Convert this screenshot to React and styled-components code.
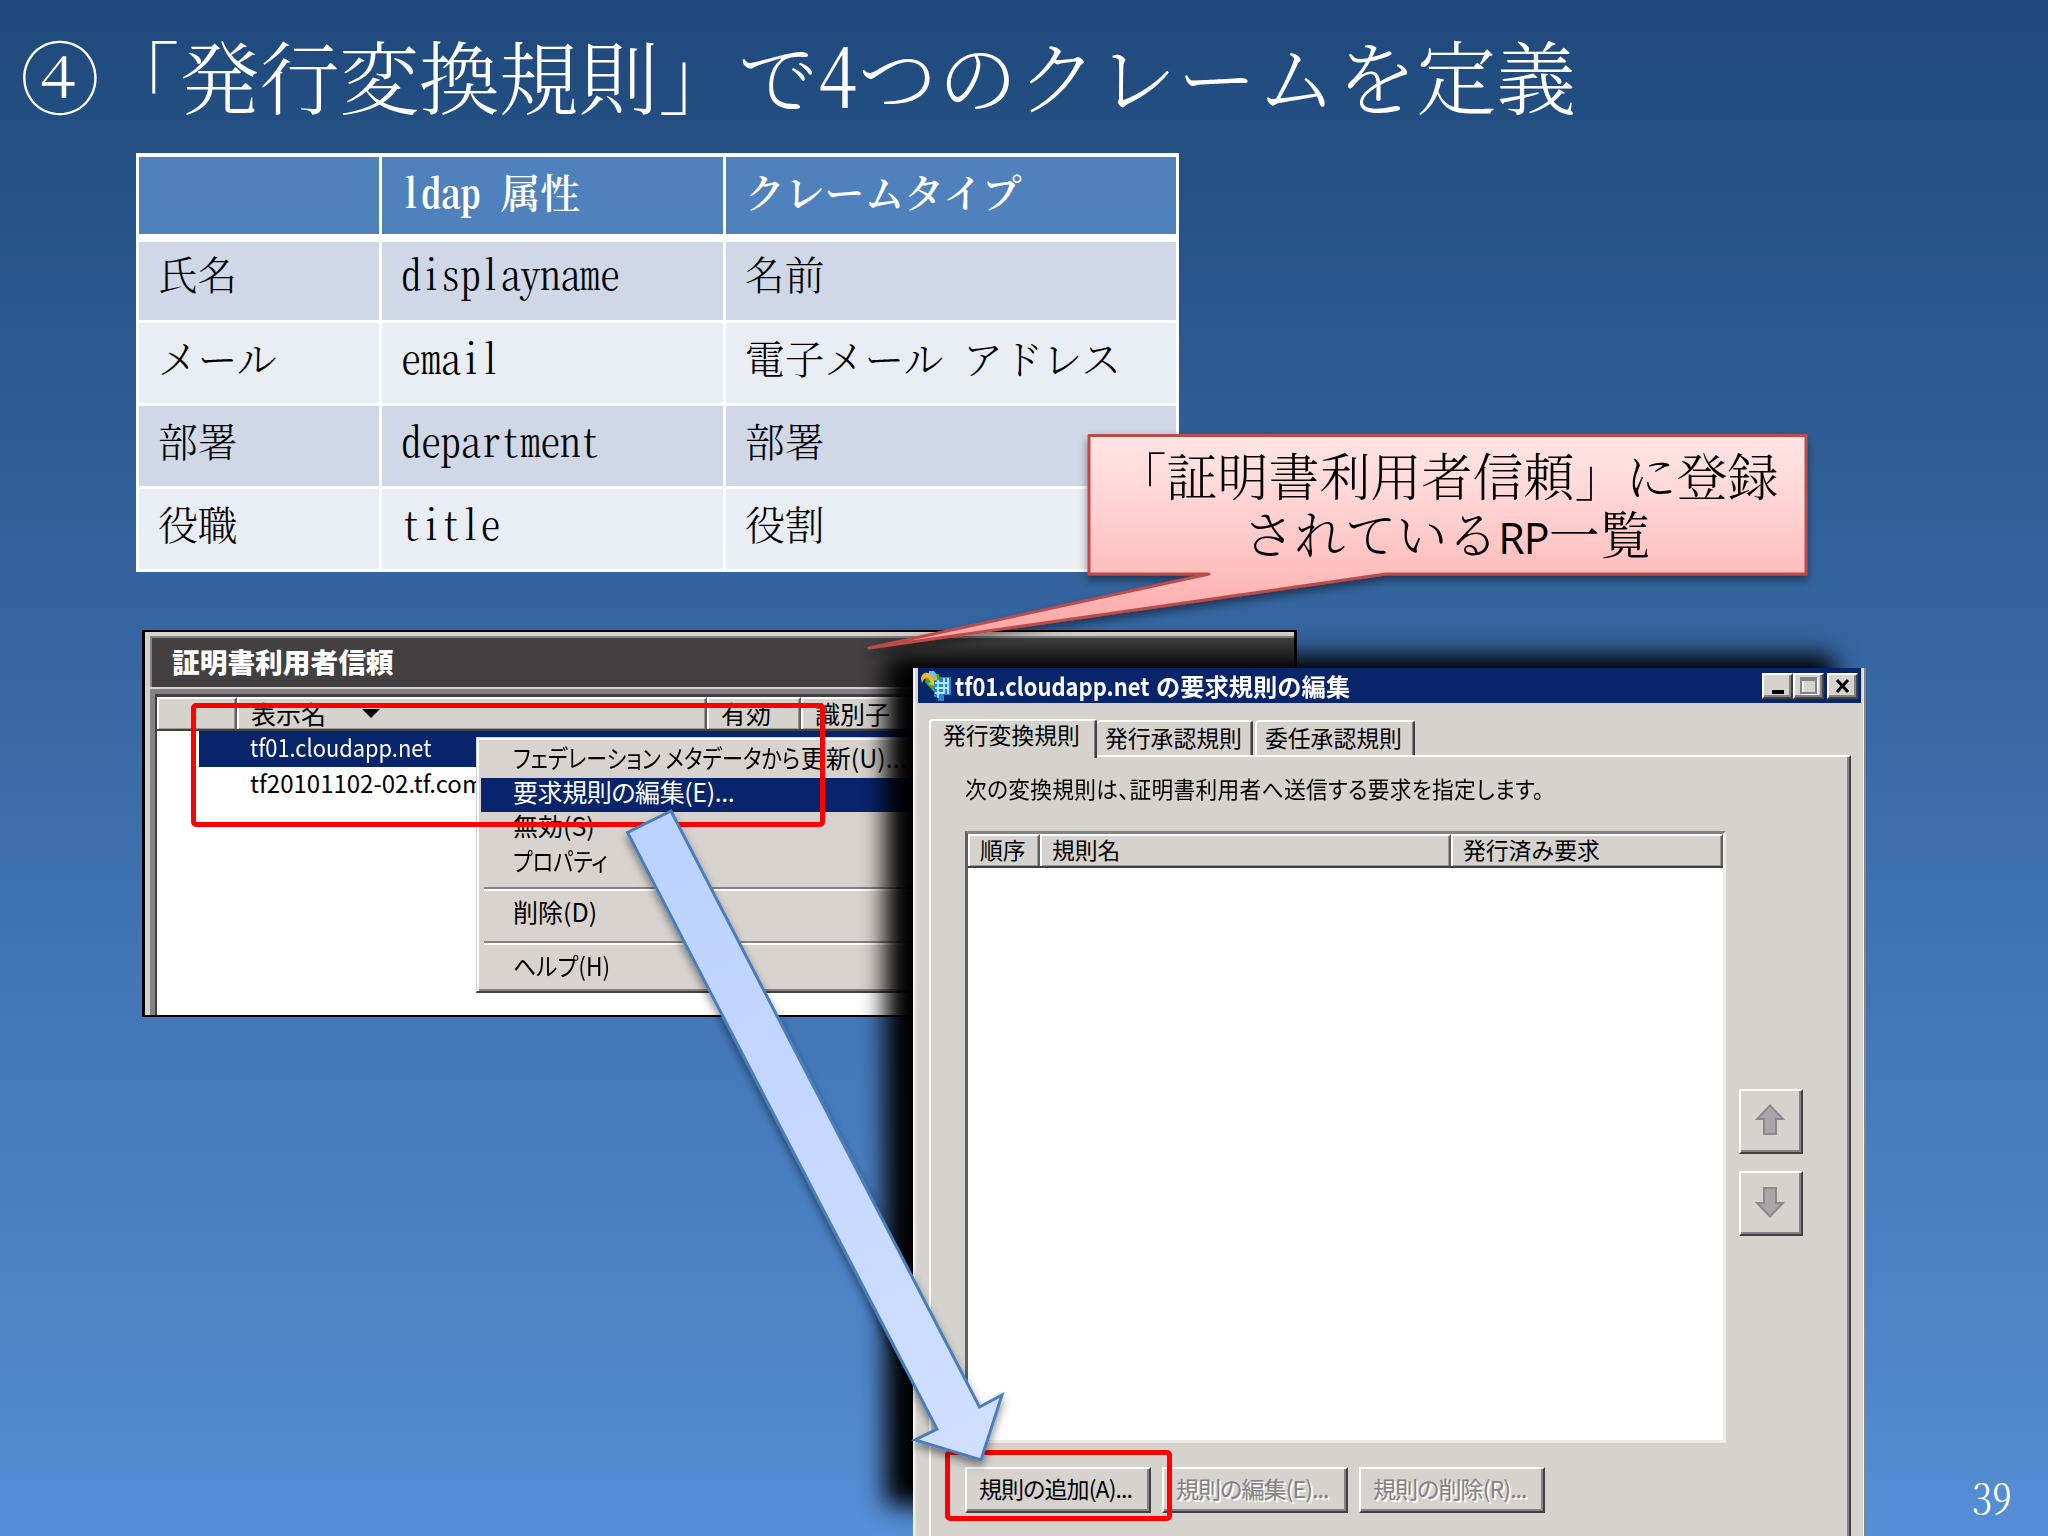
import React from 'react';
import styled, { createGlobalStyle, css } from 'styled-components';

const GlobalStyle = createGlobalStyle`
  * { box-sizing: border-box; }
  body { margin: 0; overflow: hidden; }
`;

const mincho = '"Noto Serif CJK JP", "Liberation Serif", "Noto Sans CJK JP", serif';
const gothic = '"Noto Sans CJK JP", sans-serif';
const face = '#d6d3ce';

const Slide = styled.main`
  position: relative;
  width: 2048px;
  height: 1536px;
  overflow: hidden;
  background: linear-gradient(#1f497b, #558ed5);
  font-family: ${gothic};
  color: #000;
`;

const Title = styled.h1`
  margin: 0;
  padding: 25px 0 0 20px;
  height: 153px;
  font: 300 79.8px/98px ${mincho};
  font-feature-settings: 'hwid';
  color: #fff;
  white-space: nowrap;
`;

const Table = styled.section`
  display: grid;
  grid-template-columns: 240px 341px 450px;
  grid-template-rows: 77px 83px 80px 80px 80px;
  gap: 3px;
  width: 1043px;
  margin-left: 136px;
  padding: 4px 3px 3px;
  background: #fff;
`;

const Cell = styled.div`
  padding: ${(p) => (p.$first ? 14 : 12)}px 0 0 19px;
  background: ${(p) => (p.$band ? '#d0d8e8' : '#e9edf4')};
  font: 300 39.8px/44px ${mincho};
  font-feature-settings: 'hwid';
  white-space: pre;
`;

const HeadCell = styled(Cell)`
  position: relative;
  background: #4f81bd;
  color: #fff;
  font-weight: 600;
  &::after {
    content: '';
    position: absolute;
    left: 0;
    right: 0;
    bottom: -8px;
    height: 8px;
    background: #fff;
  }
`;

const Console = styled.section`
  position: absolute;
  left: 142px;
  top: 630px;
  width: 1155px;
  height: 387px;
  border: 3px solid #000;
  border-top-width: 2px;
  border-bottom-width: 2px;
  background: ${face};
  padding: 4px 0 0 5px;
  display: flex;
  flex-direction: column;
  overflow: hidden;
`;

const ConsoleTitle = styled.h2`
  margin: 0;
  flex: none;
  height: 51px;
  border-top: 2px solid #848284;
  border-left: 2px solid #848284;
  background: #424041;
  color: #fff;
  font: 900 27.7px/46px ${gothic};
  padding-left: 20px;
`;

const ConsoleBody = styled.div`
  margin-top: 2px;
  flex: 1;
  border-top: 5px solid #848284;
  border-left: 5px solid #848284;
  background: #fff;
`;

const ConsoleInner = styled.div`
  height: 100%;
  border-top: 3px solid #424041;
  border-left: 2px solid #424041;
`;

const HeaderRow = styled.div`
  display: grid;
  grid-template-columns: ${(p) => p.$cols};
  height: ${(p) => p.$h}px;
  border-bottom: 2px solid #424142;
`;

const HeaderCell = styled.div`
  display: flex;
  align-items: center;
  gap: 36px;
  background: ${face};
  border-top: 2px solid #fff;
  border-left: 2px solid #fff;
  border-right: 2px solid #62605d;
  box-shadow: inset -1px -1px #9a9894;
  padding-left: ${(p) => p.$pad}px;
  padding-bottom: 2px;
  font-size: ${(p) => p.$size}px;
  line-height: 1;
  white-space: nowrap;
`;

const SortMark = styled.span`
  border: 9px solid transparent;
  border-top-color: #000;
  border-bottom: 0;
`;

const ListRow = styled.div`
  margin-left: 42px;
  height: 36px;
  padding-left: 51px;
  font-size: 24px;
  line-height: 31px;
  white-space: nowrap;
  ${(p) => p.$selected && css`
    background: #08246b;
    color: #fff;
  `}
`;

const Squeeze = styled.span`
  display: inline-block;
  transform: scaleX(${(p) => p.$k});
  transform-origin: 0 50%;
  margin-right: ${(p) => p.$pull || 0}px;
`;

const Menu = styled.div`
  position: absolute;
  left: 476px;
  top: 737px;
  width: 470px;
  height: 256px;
  display: flex;
  flex-direction: column;
  padding: 3px 4px 0;
  background: #d9d3cf;
  border-style: solid;
  border-color: #d6d3ce #d6d3ce #424041;
  border-width: 1px 1px 2px;
  box-shadow: inset 2px 2px #fff, inset 0 -2px #848284;
`;

const MenuItem = styled.div`
  flex: none;
  height: ${(p) => p.$h || 34}px;
  padding-left: 32px;
  font-size: 25px;
  line-height: ${(p) => p.$lh || 26}px;
  font-feature-settings: 'palt';
  letter-spacing: ${(p) => (p.$active ? -0.4 : 0)}px;
  white-space: nowrap;
  ${(p) => p.$active && css`
    background: #08246b;
    color: #fff;
  `}
`;

const MenuRule = styled.hr`
  flex: none;
  width: calc(100% - 4px);
  height: 3px;
  margin: ${(p) => p.$above}px 0 7px 3px;
  border: 0;
  border-top: 2px solid #848284;
  border-bottom: 2px solid #fff;
`;

const Highlight = styled.div`
  position: absolute;
  left: ${(p) => p.$x}px;
  top: ${(p) => p.$y}px;
  width: ${(p) => p.$w}px;
  height: ${(p) => p.$h}px;
  border: 5px solid #fe0000;
  border-radius: 5px;
`;

const Dialog = styled.section`
  position: absolute;
  left: 913px;
  top: 668px;
  width: 953px;
  height: 868px;
  background: ${face};
  border-left: 2px solid #f4f3f0;
  border-right: 2px solid #85827f;
  box-shadow: inset 2px 0 #dcdad6, inset -1px 0 #f4f3f0;
  padding: 0 3px;
`;

const DialogShadow = styled.div`
  position: absolute;
  left: 885px;
  top: 655px;
  width: 950px;
  height: 851px;
  background: #000;
  border-radius: 10px;
  filter: blur(12px);
`;

const DialogTitle = styled.header`
  display: flex;
  align-items: center;
  height: 35px;
  background: #08246b;
  padding: 0 3px 0 2px;
  color: #fff;
`;

const DialogName = styled.h2`
  margin: 0 auto 0 3px;
  font: 700 24.4px/32px ${gothic};
  white-space: pre;
`;

const bevel = css`
  background: ${face};
  border: 2px solid;
  border-color: #fff #424142 #424142 #fff;
  box-shadow: inset -2px -2px #848284;
`;

const CaptionButton = styled.span`
  ${bevel}
  flex: none;
  width: 31px;
  height: 26px;
  display: flex;
  align-items: center;
  justify-content: center;
  margin-left: ${(p) => p.$gap || 0}px;
`;

const Tabs = styled.nav`
  display: flex;
  align-items: flex-end;
  height: 52px;
  padding-left: 11px;
`;

const Tab = styled.div`
  position: relative;
  height: ${(p) => (p.$active ? 39 : 35)}px;
  width: ${(p) => p.$w}px;
  margin-right: ${(p) => p.$gap || 0}px;
  background: ${face};
  border-top: 2px solid #fff;
  border-left: ${(p) => (p.$flat ? 0 : 2)}px solid #fff;
  border-right: 2px solid #424142;
  border-radius: 4px 3px 0 0;
  box-shadow: inset -1px 0 #848284;
  padding-left: ${(p) => p.$pad}px;
  font-size: 22.8px;
  line-height: ${(p) => (p.$active ? 27 : 31)}px;
  white-space: nowrap;
  z-index: ${(p) => (p.$active ? 1 : 0)};
  margin-bottom: ${(p) => (p.$active ? -3 : 0)}px;
`;

const TabPanel = styled.div`
  width: 922px;
  height: 790px;
  margin-left: 11px;
  border-top: 2px solid #fff;
  border-left: 2px solid #fff;
  border-right: 2px solid #424142;
  box-shadow: inset -2px 0 #848284;
  padding: 16px 0 0 34px;
`;

const Description = styled.p`
  margin: 0;
  height: 58px;
  font-size: 23px;
  line-height: 31px;
  font-feature-settings: 'palt';
  letter-spacing: 0.3px;
  white-space: nowrap;
`;

const PanelRow = styled.div`
  display: flex;
  gap: 13px;
`;

const RuleList = styled.div`
  width: 761px;
  height: 612px;
  background: #fff;
  border: 3px solid;
  border-color: #848284 #eeece9 #eeece9 #62605e;
`;

const Movers = styled.div`
  display: flex;
  flex-direction: column;
  gap: 17px;
  padding-top: 258px;
`;

const MoveButton = styled.span`
  ${bevel}
  width: 64px;
  height: 65px;
  display: flex;
  align-items: center;
  justify-content: center;
  padding: 0 2px 3px 0;
`;

const Actions = styled.div`
  display: flex;
  gap: 11px;
  padding-top: 24px;
`;

const ActionButton = styled.span`
  ${bevel}
  width: 186px;
  height: 46px;
  padding-left: 12px;
  font-size: 23px;
  line-height: 39px;
  font-feature-settings: 'palt';
  letter-spacing: -0.9px;
  white-space: nowrap;
  ${(p) => p.$disabled && css`
    color: #848284;
    text-shadow: 2px 2px #fff;
  `}
`;

const Overlay = styled.svg`
  position: absolute;
  inset: 0;
`;

const CalloutText = styled.p`
  position: absolute;
  left: 1087px;
  top: 446px;
  width: 720px;
  margin: 0;
  text-align: center;
  font: 300 51px/57.5px ${mincho};
  white-space: nowrap;
`;

const Sans = styled.span`
  font-family: 'Open Sans', sans-serif;
  font-size: 43px;
  font-weight: 500;
  letter-spacing: -1px;
`;

const PageNumber = styled.footer`
  position: absolute;
  right: 36px;
  top: 1474px;
  font: 300 40px/46px ${mincho};
  font-feature-settings: 'hwid';
  color: #fff;
`;

const rows = [
  ['氏名', 'displayname', '名前'],
  ['メール', 'email', '電子メール アドレス'],
  ['部署', 'department', '部署'],
  ['役職', 'title', '役割'],
];

function WizardIcon() {
  return (
    <svg width="32" height="31" viewBox="0 0 32 31">
      <path d="M7 4h12l2 10-7 8L5 12z" fill="#36a93f" />
      <path d="M9 1h5l3 4-3 4-5-4z" fill="#6fc3f2" />
      <path d="M1 9c0-5 5-8 9-5l4 5 3-3v11L8 14l3-2-3-4-4 1-2 4z" fill="#f4b81f" />
      <path d="M14 10h6V7h11v18h-7v6h-6v-4h-4z" fill="#2c83d4" />
      <path d="M15 13h14M15 18h14M15 23h9M18 10v18M24 8v16M28 8v16" stroke="#b4e9ff" strokeWidth="1.8" fill="none" />
    </svg>
  );
}

function MoveArrow({ down }) {
  return (
    <svg width="30" height="32" viewBox="0 0 30 32">
      <path
        d="M15 1.500 28 15h-7v15H9V15H2z"
        transform={down ? 'rotate(180 15 16)' : undefined}
        fill="#a8a6a8"
        stroke="#8b898b"
        strokeWidth="2"
      />
    </svg>
  );
}

export default function App() {
  return (
    <Slide lang="ja">
      <GlobalStyle />
      <Title>④「発行変換規則」で4つのクレームを定義</Title>
      <Table>
        <HeadCell />
        <HeadCell>ldap 属性</HeadCell>
        <HeadCell>クレームタイプ</HeadCell>
        {rows.map(([name, attr, type], i) => (
          <React.Fragment key={attr}>
            <Cell $first={i === 0} $band={i % 2 === 0}>{name}</Cell>
            <Cell $first={i === 0} $band={i % 2 === 0}>{attr}</Cell>
            <Cell $first={i === 0} $band={i % 2 === 0}>{type}</Cell>
          </React.Fragment>
        ))}
      </Table>

      <Console>
        <ConsoleTitle>証明書利用者信頼</ConsoleTitle>
        <ConsoleBody>
          <ConsoleInner>
            <HeaderRow $cols="80px 470px 94px 1fr" $h={34}>
              <HeaderCell />
              <HeaderCell $pad={12} $size={25}>表示名<SortMark /></HeaderCell>
              <HeaderCell $pad={12} $size={25}>有効</HeaderCell>
              <HeaderCell $pad={12} $size={25}>識別子</HeaderCell>
            </HeaderRow>
            <ListRow $selected><Squeeze $k={0.91}>tf01.cloudapp.net</Squeeze></ListRow>
            <ListRow>tf20101102-02.tf.com</ListRow>
          </ConsoleInner>
        </ConsoleBody>
      </Console>

      <Menu>
        <MenuItem $h={37} $lh={33}>
          <Squeeze $k={0.845} $pull={-52}>フェデレーション メタデータから</Squeeze>更新(U)...
        </MenuItem>
        <MenuItem $active>要求規則の編集(E)...</MenuItem>
        <MenuItem>無効(S)</MenuItem>
        <MenuItem $lh={28}><Squeeze $k={0.85}>プロパティ</Squeeze></MenuItem>
        <MenuRule $above={7} />
        <MenuItem>削除(D)</MenuItem>
        <MenuRule $above={9} />
        <MenuItem><Squeeze $k={0.91}>ヘルプ(H)</Squeeze></MenuItem>
      </Menu>

      <DialogShadow />
      <Highlight $x={191} $y={703} $w={634} $h={124} />

      <Dialog>
        <DialogTitle>
          <WizardIcon />
          <DialogName>
            <Squeeze $k={0.9} $pull={-21}>tf01.cloudapp.net</Squeeze> <Squeeze $k={0.995}>の要求規則の編集</Squeeze>
          </DialogName>
          <CaptionButton>
            <svg width="14" height="18"><path d="M1 15h12" stroke="#000" strokeWidth="4" /></svg>
          </CaptionButton>
          <CaptionButton>
            <svg width="20" height="20">
              <path d="M3.5 3h15v15h-15z" stroke="#fff" strokeWidth="2" fill="none" />
              <path d="M2 2h15v15H2zM2 4h15" stroke="#848284" strokeWidth="2" fill="none" />
            </svg>
          </CaptionButton>
          <CaptionButton $gap={3}>
            <svg width="18" height="18"><path d="m3 3 11 12M14 3 3 15" stroke="#000" strokeWidth="3" /></svg>
          </CaptionButton>
        </DialogTitle>
        <Tabs>
          <Tab $active $w={168} $pad={12}>発行変換規則</Tab>
          <Tab $w={156} $pad={8} $gap={2} $flat>発行承認規則</Tab>
          <Tab $w={160} $pad={8}>委任承認規則</Tab>
        </Tabs>
        <TabPanel>
          <Description>
            <Squeeze $k={0.945}>次の変換規則は、証明書利用者へ送信する要求を指定します。</Squeeze>
          </Description>
          <PanelRow>
            <RuleList>
              <HeaderRow $cols="72px 411px 1fr" $h={34}>
                <HeaderCell $pad={10} $size={22.8}>順序</HeaderCell>
                <HeaderCell $pad={10} $size={22.8}>規則名</HeaderCell>
                <HeaderCell $pad={10} $size={22.8}>発行済み要求</HeaderCell>
              </HeaderRow>
            </RuleList>
            <Movers>
              <MoveButton><MoveArrow /></MoveButton>
              <MoveButton><MoveArrow down /></MoveButton>
            </Movers>
          </PanelRow>
          <Actions>
            <ActionButton>規則の追加(A)...</ActionButton>
            <ActionButton $disabled>規則の編集(E)...</ActionButton>
            <ActionButton $disabled>規則の削除(R)...</ActionButton>
          </Actions>
        </TabPanel>
      </Dialog>

      <Highlight $x={945} $y={1450} $w={227} $h={71} />

      <Overlay width="2048" height="1536">
        <defs>
          <linearGradient id="pink" gradientUnits="userSpaceOnUse" x1="0" y1="434" x2="0" y2="648">
            <stop offset="0" stopColor="#ffe5e5" />
            <stop offset="0.2" stopColor="#ffdcdc" />
            <stop offset="0.65" stopColor="#ffbebd" />
            <stop offset="1" stopColor="#ffa2a1" />
          </linearGradient>
          <linearGradient id="sky" gradientUnits="userSpaceOnUse" x1="640" y1="850" x2="960" y2="1450">
            <stop offset="0" stopColor="#bcd2ff" />
            <stop offset="0.5" stopColor="#c6d8ff" />
            <stop offset="1" stopColor="#d0dfff" />
          </linearGradient>
          <filter id="soft" x="-10%" y="-10%" width="120%" height="130%">
            <feDropShadow dx="0" dy="5" stdDeviation="4" floodColor="#000" floodOpacity="0.45" />
          </filter>
        </defs>
        <path
          d="M1089 435.500H1806V574H1386L869 648 1209 574H1089z"
          fill="url(#pink)"
          stroke="#be4b48"
          strokeWidth="3"
          strokeLinejoin="round"
          filter="url(#soft)"
        />
        <path
          d="M627.500 832.500 671 811 979.500 1407 1002 1395 981 1460 915 1440 937 1429z"
          fill="url(#sky)"
          stroke="#4a7ebb"
          strokeWidth="3"
          filter="url(#soft)"
        />
      </Overlay>
      <CalloutText>「証明書利用者信頼」に登録<br />されている<Sans>RP</Sans>一覧</CalloutText>
      <PageNumber>39</PageNumber>
    </Slide>
  );
}
